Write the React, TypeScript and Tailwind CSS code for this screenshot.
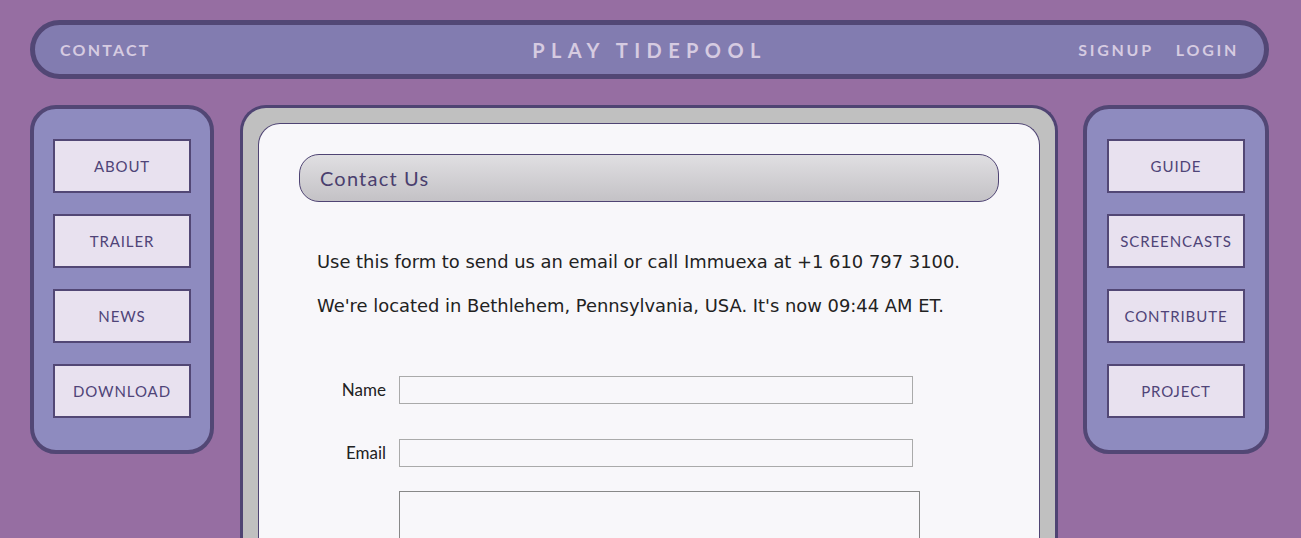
const leftLinks = ["About", "Trailer", "News", "Download"];
const rightLinks = ["Guide", "Screencasts", "Contribute", "Project"];

function SideNav({ links }: { links: string[] }) {
  return (
    <nav className="flex h-[349px] flex-col items-center gap-[21px] rounded-[26px] border-4 border-[#524775] bg-[#8e8bbf] pt-[30px]">
      {links.map((link) => (
        <a
          key={link}
          href="#"
          className="flex h-[54px] w-[138px] items-center justify-center border-2 border-[#524775] bg-[#e8e1ef] font-['Lato',sans-serif] text-[15px] uppercase tracking-[0.06em] text-[#4f4478]"
        >
          {link}
        </a>
      ))}
    </nav>
  );
}

export default function App() {
  return (
    <div className="min-h-[538px] bg-[#966ea2] pt-5 pl-[30px] pr-[32px] font-['Lato',sans-serif]">
      <header className="flex h-[59px] w-[1239px] items-center justify-between rounded-full border-[5px] border-[#524775] bg-[#827cb0] px-[25px] text-[#d6cbe1]">
        <a href="#" className="w-[220px] text-[16px] font-bold uppercase tracking-[0.14em]">
          Contact
        </a>
        <h1 className="text-[20px] font-bold uppercase tracking-[0.32em]">Play Tidepool</h1>
        <div className="flex w-[220px] justify-end gap-[22px] text-[16px] font-bold uppercase tracking-[0.17em]">
          <a href="#">Signup</a>
          <a href="#">Login</a>
        </div>
      </header>

      <div className="mt-[26px] flex items-start">
        <div className="w-[184px] shrink-0">
          <SideNav links={leftLinks} />
        </div>

        <main className="ml-[26px] w-[818px] shrink-0 rounded-t-[26px] border-[3px] border-b-0 border-[#4f4473] bg-[#c0c0c0] px-[15px] pt-[15px]">
          <div className="rounded-t-[22px] border border-b-0 border-[#4f4473] bg-[#f8f7fa] px-10 pt-[30px] pb-10">
            <div className="flex h-12 items-center rounded-[20px] border border-[#4f4473] bg-gradient-to-b from-[#e0dfe2] to-[#c4c2c6] px-5">
              <h2 className="text-[20px] tracking-[0.06em] text-[#4a3f6e]">Contact Us</h2>
            </div>

            <div className="mt-[48px] pl-[18px] font-['DejaVu_Sans',sans-serif] text-[17.9px] text-[#222]">
              <p className="leading-6">Use this form to send us an email or call Immuexa at +1 610 797 3100.</p>
              <p className="mt-5 leading-6">We're located in Bethlehem, Pennsylvania, USA. It's now 09:44 AM ET.</p>
            </div>

            <form className="mt-[58px] flex flex-col gap-[35px] text-[17px] text-[#222]">
              <label className="flex items-center">
                <span className="w-[100px] pr-[13px] text-right">Name</span>
                <input className="h-7 w-[514px] border border-[#aaa] bg-[#f8f7fa]" />
              </label>
              <label className="flex items-center">
                <span className="w-[100px] pr-[13px] text-right">Email</span>
                <input className="h-7 w-[514px] border border-[#aaa] bg-[#f8f7fa]" />
              </label>
              <label className="-mt-[11px] flex items-start">
                <span className="w-[100px]" />
                <textarea className="h-[120px] w-[521px] border border-[#888] bg-[#f8f7fa]" />
              </label>
            </form>
          </div>
        </main>

        <div className="ml-[25px] w-[186px] shrink-0">
          <SideNav links={rightLinks} />
        </div>
      </div>
    </div>
  );
}
